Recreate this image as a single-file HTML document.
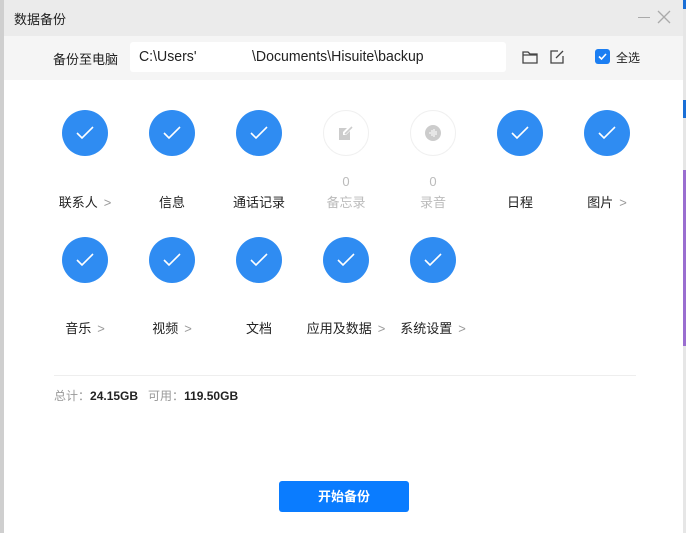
<!DOCTYPE html>
<html><head><meta charset="utf-8"><style>
*{margin:0;padding:0;box-sizing:border-box}
body{width:686px;height:533px;overflow:hidden;background:#fff;position:relative;font-family:"Liberation Sans","Noto Sans CJK SC",sans-serif;color:#222}
.a{position:absolute}
.c{position:absolute;width:46px;height:46px;border-radius:50%;background:#2f8cf2}
.c svg{position:absolute;left:13px;top:14px}
.g{position:absolute;width:46px;height:46px;border-radius:50%;border:1px solid #f0f0f0;background:#fff}
.l{position:absolute;font-size:13px;color:#222;white-space:nowrap;transform:translateX(-50%)}
.l i{font-style:normal;color:#999;margin-left:6px}
.gr{color:#bbb}
.p{position:absolute;font-size:15px;color:#222;transform:scaleX(0.94);transform-origin:0 0;white-space:nowrap}
</style></head><body>
<div class="a" style="left:0;top:0;width:4px;height:533px;background:#cfcfcf"></div>
<div class="a" style="left:683px;top:0;width:3px;height:533px;background:#e6e6e6"></div>
<div class="a" style="left:683px;top:0;width:3px;height:9px;background:#1a6fd6"></div>
<div class="a" style="left:683px;top:100px;width:3px;height:18px;background:#1a6fd6"></div>
<div class="a" style="left:683px;top:170px;width:3px;height:176px;background:#9a6ed0"></div>
<div class="a" style="left:4px;top:0;width:679px;height:36px;background:#ebebeb"></div>
<div class="a" style="left:14px;top:9px;font-size:13px;color:#222">数据备份</div>
<div class="a" style="left:638px;top:17px;width:12px;height:1px;background:#aaa"></div>
<svg class="a" style="left:657px;top:10px" width="14" height="14"><path d="M1 1L13 13M13 1L1 13" stroke="#aaa" stroke-width="1.3"/></svg>
<div class="a" style="left:4px;top:36px;width:679px;height:44px;background:#f5f5f5"></div>
<div class="a" style="left:53px;top:49px;font-size:13px">备份至电脑</div>
<div class="a" style="left:130px;top:42px;width:376px;height:30px;background:#fff;border-radius:3px"></div>
<div class="p" style="left:139px;top:48px">C:\Users'</div>
<div class="p" style="left:252px;top:48px">\Documents\Hisuite\backup</div>
<svg class="a" style="left:522px;top:50px" width="16" height="14"><path d="M1 2h5l2 2h7v9H1z M1 5h14" fill="none" stroke="#444" stroke-width="1.3"/></svg>
<svg class="a" style="left:549px;top:49px" width="16" height="16"><path d="M9 2H2v12h12V7 M7 9l7-7" fill="none" stroke="#444" stroke-width="1.3"/></svg>
<div class="a" style="left:595px;top:49px;width:15px;height:15px;border-radius:3px;background:#1b7ef2"></div>
<svg class="a" style="left:597px;top:51px" width="11" height="11"><path d="M2 5.5l2.5 2.5L9 3" fill="none" stroke="#fff" stroke-width="1.6"/></svg>
<div class="a" style="left:616px;top:49px;font-size:12px">全选</div>

<div class="c" style="left:62px;top:110px"><svg width="20" height="18"><path d="M2 9l5 5L18 3" fill="none" stroke="#fff" stroke-width="1.6"/></svg></div>
<div class="c" style="left:149px;top:110px"><svg width="20" height="18"><path d="M2 9l5 5L18 3" fill="none" stroke="#fff" stroke-width="1.6"/></svg></div>
<div class="c" style="left:236px;top:110px"><svg width="20" height="18"><path d="M2 9l5 5L18 3" fill="none" stroke="#fff" stroke-width="1.6"/></svg></div>
<div class="g" style="left:323px;top:110px"><svg class="a" style="left:14px;top:14px" width="16" height="16"><path d="M1 3h8l-4 4v3h3l4-4v9H1z" fill="#ccc"/><path d="M7 9l7-7" stroke="#ccc" stroke-width="1.6"/></svg></div>
<div class="g" style="left:410px;top:110px"><div class="a" style="left:14px;top:14px;width:16px;height:16px;border-radius:50%;background:#ccc"></div><svg class="a" style="left:16px;top:16px" width="12" height="12"><path d="M3 5v2M5 3v6M7 2v8M9 4v4" stroke="#fff" stroke-width="1"/></svg></div>
<div class="c" style="left:497px;top:110px"><svg width="20" height="18"><path d="M2 9l5 5L18 3" fill="none" stroke="#fff" stroke-width="1.6"/></svg></div>
<div class="c" style="left:584px;top:110px"><svg width="20" height="18"><path d="M2 9l5 5L18 3" fill="none" stroke="#fff" stroke-width="1.6"/></svg></div>
<div class="l gr" style="left:346px;top:174px;font-size:13px">0</div>
<div class="l gr" style="left:433px;top:174px;font-size:13px">0</div>
<div class="l" style="left:85px;top:192px">联系人<i>&gt;</i></div>
<div class="l" style="left:172px;top:192px">信息</div>
<div class="l" style="left:259px;top:192px">通话记录</div>
<div class="l gr" style="left:346px;top:192px">备忘录</div>
<div class="l gr" style="left:433px;top:192px">录音</div>
<div class="l" style="left:520px;top:192px">日程</div>
<div class="l" style="left:607px;top:192px">图片<i>&gt;</i></div>

<div class="c" style="left:62px;top:237px"><svg width="20" height="18"><path d="M2 9l5 5L18 3" fill="none" stroke="#fff" stroke-width="1.6"/></svg></div>
<div class="c" style="left:149px;top:237px"><svg width="20" height="18"><path d="M2 9l5 5L18 3" fill="none" stroke="#fff" stroke-width="1.6"/></svg></div>
<div class="c" style="left:236px;top:237px"><svg width="20" height="18"><path d="M2 9l5 5L18 3" fill="none" stroke="#fff" stroke-width="1.6"/></svg></div>
<div class="c" style="left:323px;top:237px"><svg width="20" height="18"><path d="M2 9l5 5L18 3" fill="none" stroke="#fff" stroke-width="1.6"/></svg></div>
<div class="c" style="left:410px;top:237px"><svg width="20" height="18"><path d="M2 9l5 5L18 3" fill="none" stroke="#fff" stroke-width="1.6"/></svg></div>
<div class="l" style="left:85px;top:318px">音乐<i>&gt;</i></div>
<div class="l" style="left:172px;top:318px">视频<i>&gt;</i></div>
<div class="l" style="left:259px;top:318px">文档</div>
<div class="l" style="left:346px;top:318px">应用及数据<i>&gt;</i></div>
<div class="l" style="left:433px;top:318px">系统设置<i>&gt;</i></div>

<div class="a" style="left:54px;top:375px;width:582px;height:1px;background:#eee"></div>
<div class="a" style="left:54px;top:387px;font-size:12px;color:#999">总计：<b style="color:#222;font-weight:bold">24.15GB</b>&nbsp;&nbsp;&nbsp;可用：<b style="color:#222;font-weight:bold">119.50GB</b></div>
<div class="a" style="left:279px;top:481px;width:130px;height:31px;border-radius:3px;background:#0a7cff;color:#fff;font-size:13px;font-weight:bold;text-align:center;line-height:31px">开始备份</div>
</body></html>
